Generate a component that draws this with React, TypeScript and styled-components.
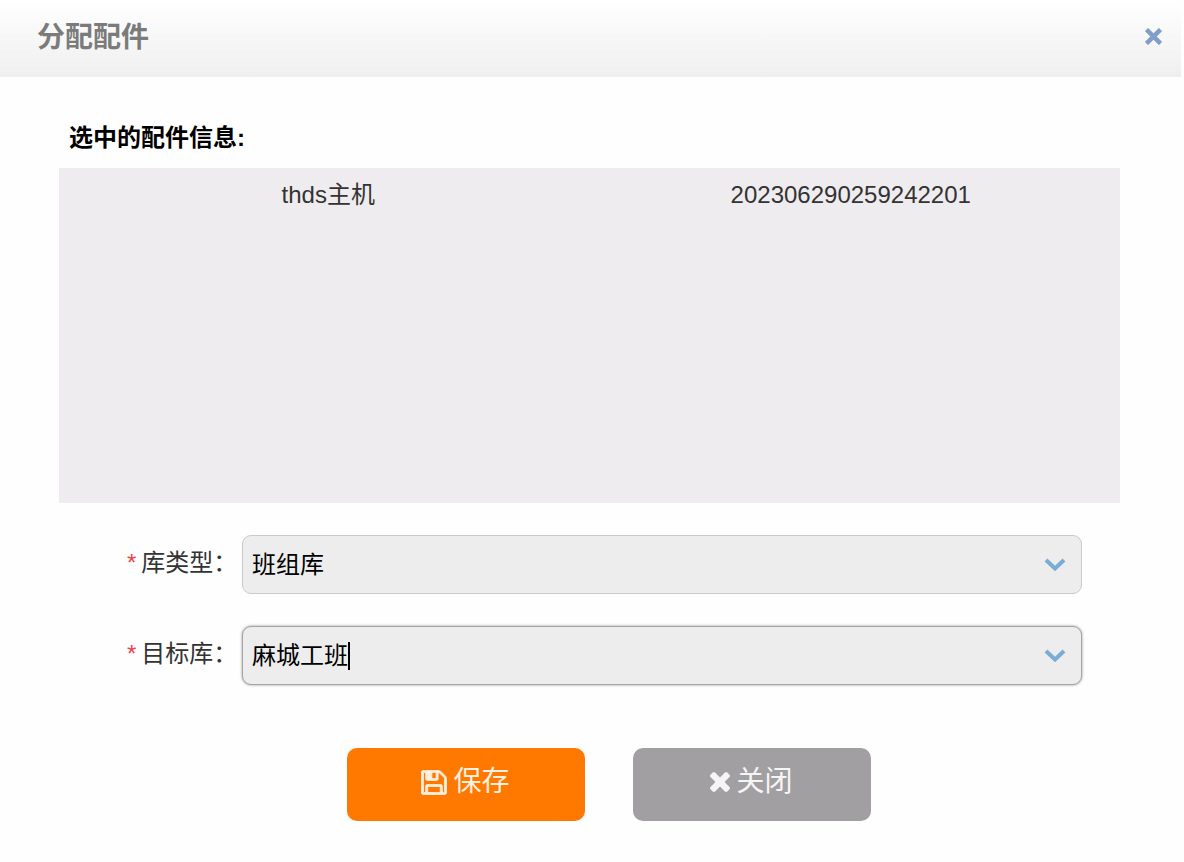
import React, { useState } from 'react';
import styled, { createGlobalStyle, css } from 'styled-components';

const GlobalStyle = createGlobalStyle`
  *, *::before, *::after { box-sizing: border-box; }
  body {
    margin: 0;
    background: #fefefe;
    color: #333;
    font-family: "Liberation Sans", "Noto Sans CJK SC", sans-serif;
    font-size: 24px;
    line-height: 32px;
  }
  button, input, select { font: inherit; }
`;

const Dialog = styled.section`
  padding-right: 3px;
`;

const Header = styled.header`
  display: flex;
  align-items: center;
  justify-content: space-between;
  height: 77px;
  padding: 0 19px 4px 37px;
  border-radius: 4px 4px 0 0;
  background: linear-gradient(#ffffff, #efefef);
`;

const Title = styled.h1`
  margin: 0;
  padding-top: 2px;
  color: #7b7b7b;
  font-size: 28px;
  line-height: 36px;
  font-weight: 700;
`;

const CloseIconButton = styled.button`
  display: flex;
  padding: 0;
  border: 0;
  background: none;
  color: #7f9fca;
  cursor: pointer;
`;

const Body = styled.form`
  padding: 45px 61px 41px 59px;
`;

const SectionTitle = styled.h2`
  margin: 0 0 14px;
  padding-left: 10px;
  color: #000;
  font-size: 24px;
  line-height: 32px;
  font-weight: 700;
`;

const PartsPanel = styled.div`
  min-height: 335px;
  padding: 11px 8px;
  background: #eeecef;
`;

const PartsTable = styled.table`
  width: 100%;
  table-layout: fixed;
  border-collapse: collapse;
`;

const PartCell = styled.td`
  padding: 0;
  text-align: center;
`;

const Fields = styled.div`
  display: flex;
  flex-direction: column;
  gap: 32px;
  padding: 32px 38px 0 68px;
`;

const FieldRow = styled.div`
  display: flex;
  align-items: center;
`;

const FieldLabel = styled.label`
  display: flex;
  flex: none;
  gap: 5px;
  width: 115px;
  padding-bottom: 4px;
  white-space: nowrap;
`;

const Required = styled.span`
  color: #f0414b;
`;

const ComboBox = styled.div<{ $active?: boolean }>`
  display: grid;
  grid-template-columns: 1fr 52px;
  flex: 1;
  min-width: 0;
  height: 59px;
  border: 1px solid #c9cbcb;
  border-radius: 9px;
  background: #ededed;
  ${({ $active }) =>
    $active &&
    css`
      border-color: #a4a4a4;
      box-shadow: 0 0 3px rgba(0, 0, 0, 0.4);
    `}
`;

const controlText = css`
  border: 0;
  outline: 0;
  background: none;
  color: #000;
`;

const Select = styled.select`
  ${controlText}
  grid-area: 1 / 1 / 2 / 3;
  appearance: none;
  width: 100%;
  padding: 0 52px 0 9px;
`;

const TextArea = styled.div`
  display: flex;
  align-items: center;
  grid-area: 1 / 1 / 2 / 2;
  min-width: 0;
  padding-left: 9px;
`;

const TextInput = styled.input`
  ${controlText}
  field-sizing: content;
  padding: 0;
  caret-color: transparent;
`;

const Caret = styled.span`
  width: 2px;
  height: 28px;
  background: #000;
`;

const Arrow = styled.span`
  display: flex;
  align-items: center;
  justify-content: center;
  grid-area: 1 / 2 / 2 / 3;
  color: #79acd6;
  pointer-events: none;
`;

const Actions = styled.div`
  display: flex;
  justify-content: center;
  gap: 48px;
  padding: 63px 0 0 38px;
`;

const ActionButton = styled.button<{ $color: string; $ink: string }>`
  display: flex;
  align-items: center;
  justify-content: center;
  gap: 6px;
  width: 238px;
  height: 73px;
  padding: 0 0 5px;
  border: 0;
  border-radius: 10px;
  background: ${({ $color }) => $color};
  color: ${({ $ink }) => $ink};
  font-size: 28px;
  line-height: 36px;
  cursor: pointer;
`;

const TimesIcon = ({ size }: { size: number }) => (
  <svg width={size} height={size} viewBox="302 366 1188 1188" fill="currentColor" aria-hidden="true">
    <path d="M1490 1322q0 40-28 68l-136 136q-28 28-68 28t-68-28l-294-294-294 294q-28 28-68 28t-68-28l-136-136q-28-28-28-68t28-68l294-294-294-294q-28-28-28-68t28-68l136-136q28-28 68-28t68 28l294 294 294-294q28-28 68-28t68 28l136 136q28 28 28 68t-28 68l-294 294 294 294q28 28 28 68z" />
  </svg>
);

const CloseIcon = () => (
  <svg width="17" height="17" viewBox="0 0 17 17" fill="none" stroke="currentColor" strokeWidth="4.500" aria-hidden="true">
    <path d="M1.500 1.500L15.500 15.500M15.500 1.500L1.500 15.500" />
  </svg>
);

const SaveIcon = () => (
  <svg
    width="26"
    height="25"
    viewBox="-30 98 1596 1596"
    preserveAspectRatio="none"
    fill="currentColor"
    stroke="currentColor"
    strokeWidth="50"
    aria-hidden="true"
  >
    <path d="M384 1536h768v-384h-768v384zM1280 1536h128v-896q0-14-10-38.500t-20-34.500l-281-281q-10-10-34-20t-39-10v416q0 40-28 68t-68 28h-576q-40 0-68-28t-28-68v-416h-128v1280h128v-416q0-40 28-68t68-28h832q40 0 68 28t28 68v416zM896 608v-320q0-13-9.500-22.500t-22.500-9.500h-192q-13 0-22.500 9.500t-9.500 22.500v320q0 13 9.500 22.500t22.500 9.500h192q13 0 22.500-9.500t9.500-22.500zM1536 640v928q0 40-28 68t-68 28h-1344q-40 0-68-28t-28-68v-1344q0-40 28-68t68-28h928q40 0 88 20t76 48l280 280q28 28 48 76t20 88z" />
  </svg>
);

const ChevronIcon = () => (
  <svg width="22" height="14" viewBox="0 0 22 14" fill="none" stroke="currentColor" strokeWidth="4" aria-hidden="true">
    <path d="M2 2L11 10.500L20 2" />
  </svg>
);

const parts = [{ name: 'thds主机', serial: '202306290259242201' }];

export default function App() {
  const [target, setTarget] = useState('麻城工班');

  return (
    <>
      <GlobalStyle />
      <Dialog role="dialog" aria-labelledby="dialog-title">
        <Header>
          <Title id="dialog-title">分配配件</Title>
          <CloseIconButton type="button" aria-label="关闭">
            <CloseIcon />
          </CloseIconButton>
        </Header>
        <Body onSubmit={(event) => event.preventDefault()}>
          <SectionTitle>选中的配件信息:</SectionTitle>
          <PartsPanel>
            <PartsTable>
              <tbody>
                {parts.map((part) => (
                  <tr key={part.serial}>
                    <PartCell>{part.name}</PartCell>
                    <PartCell>{part.serial}</PartCell>
                  </tr>
                ))}
              </tbody>
            </PartsTable>
          </PartsPanel>
          <Fields>
            <FieldRow>
              <FieldLabel htmlFor="store-type">
                <Required>*</Required>库类型：
              </FieldLabel>
              <ComboBox>
                <Select id="store-type" defaultValue="班组库">
                  <option>班组库</option>
                </Select>
                <Arrow>
                  <ChevronIcon />
                </Arrow>
              </ComboBox>
            </FieldRow>
            <FieldRow>
              <FieldLabel htmlFor="target-store">
                <Required>*</Required>目标库：
              </FieldLabel>
              <ComboBox $active>
                <TextArea>
                  <TextInput
                    id="target-store"
                    role="combobox"
                    aria-expanded="false"
                    autoComplete="off"
                    value={target}
                    onChange={(event) => setTarget(event.target.value)}
                  />
                  <Caret />
                </TextArea>
                <Arrow>
                  <ChevronIcon />
                </Arrow>
              </ComboBox>
            </FieldRow>
          </Fields>
          <Actions>
            <ActionButton type="submit" $color="#ff7800" $ink="#fff0e0">
              <SaveIcon />
              保存
            </ActionButton>
            <ActionButton type="button" $color="#a29fa2" $ink="#f6f5f6">
              <TimesIcon size={20} />
              关闭
            </ActionButton>
          </Actions>
        </Body>
      </Dialog>
    </>
  );
}
